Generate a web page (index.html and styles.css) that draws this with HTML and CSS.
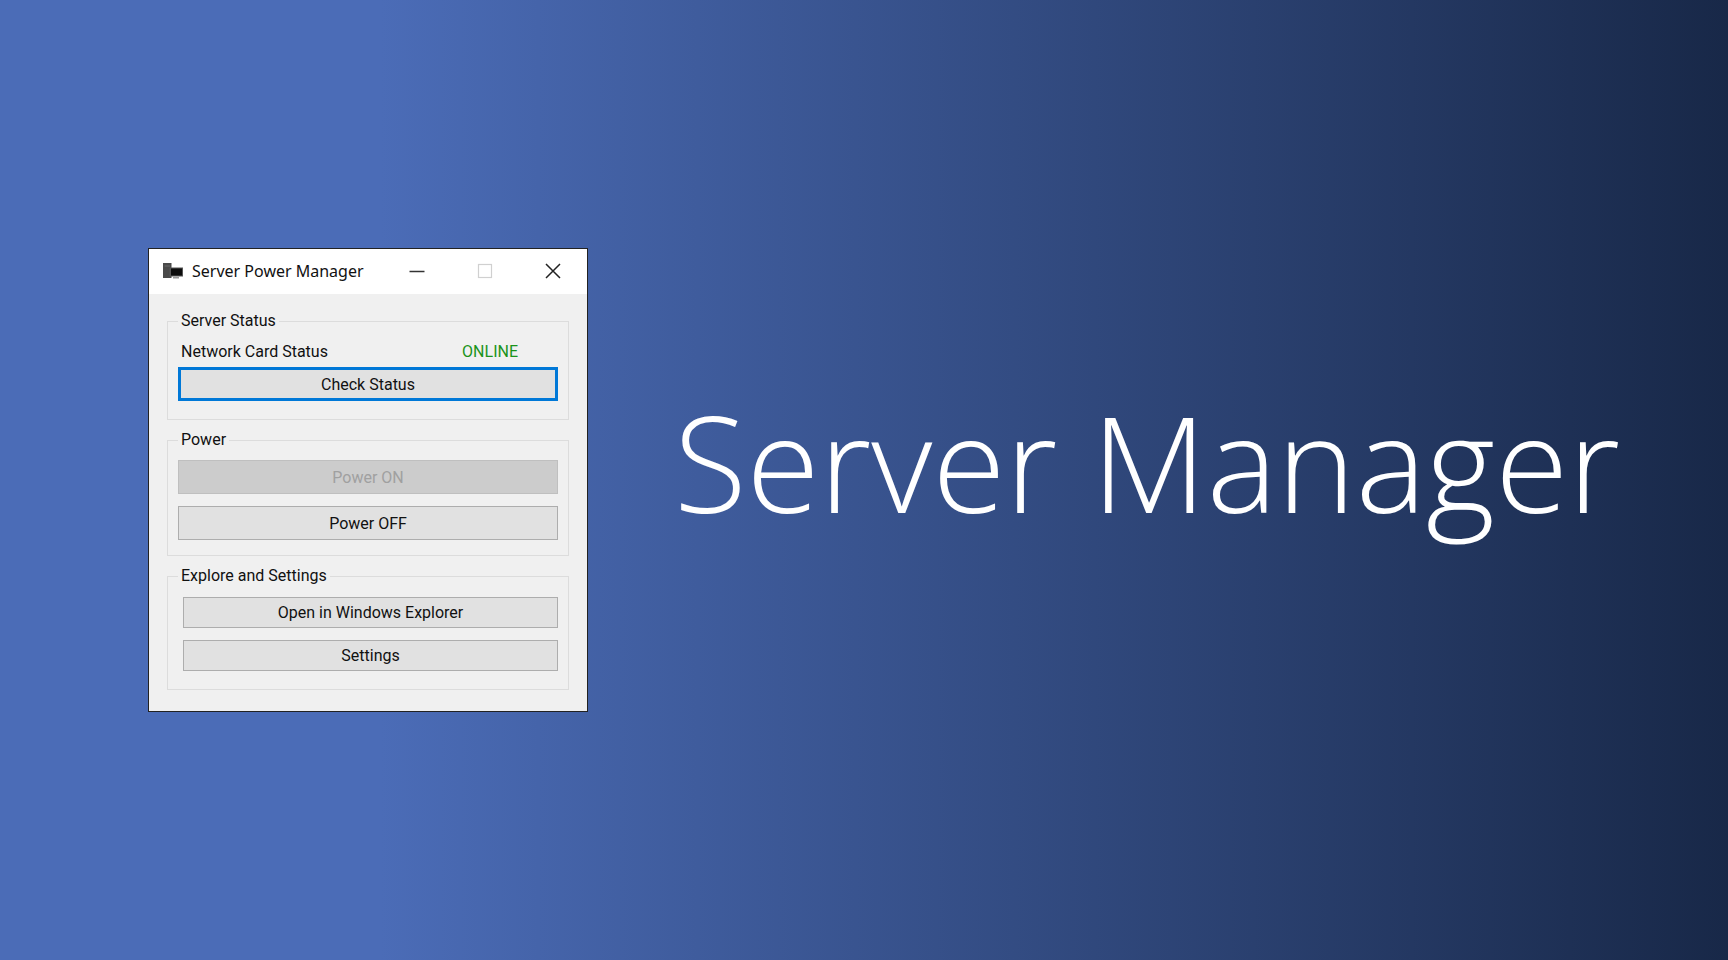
FILE: index.html
```html
<!DOCTYPE html>
<html lang="en">
<head>
<meta charset="utf-8">
<title>Server Manager</title>
<link rel="stylesheet" href="styles.css">
</head>
<body>
<main class="hero">
  <section class="window" aria-label="Server Power Manager">
    <header class="titlebar">
      <svg class="app-icon" viewBox="0 0 20 16" aria-hidden="true">
        <rect x="0" y="0" width="8.500" height="15" fill="#4a4a4a"/>
        <path d="M1.500 3H7" stroke="#6a6a6a"/>
        <rect x="6.500" y="4.500" width="13.500" height="9" fill="#555"/>
        <rect x="8" y="5.500" width="11" height="7" fill="#0c0c0c"/>
        <rect x="10" y="14" width="6" height="1.500" fill="#999"/>
      </svg>
      <span class="window-title">Server Power Manager</span>
      <div class="window-controls">
        <button class="control" aria-label="Minimize"><svg viewBox="0 0 16 16"><path d="M.5 8.500H15.500" stroke="#333" stroke-width="1.500"/></svg></button>
        <button class="control" aria-label="Maximize" disabled><svg viewBox="0 0 16 16"><rect x="1.500" y="1.500" width="13" height="13" fill="none" stroke="#d0d0d0" stroke-width="1.200"/></svg></button>
        <button class="control" aria-label="Close"><svg viewBox="0 0 16 16"><path d="M1 1L15 15M15 1L1 15" stroke="#222" stroke-width="1.500"/></svg></button>
      </div>
    </header>
    <div class="panel">
      <fieldset class="group group-status">
        <legend>Server Status</legend>
        <div class="status-row"><span>Network Card Status</span><span class="online">ONLINE</span></div>
        <button class="action action-default">Check Status</button>
      </fieldset>
      <fieldset class="group group-power">
        <legend>Power</legend>
        <button class="action" disabled>Power ON</button>
        <button class="action">Power OFF</button>
      </fieldset>
      <fieldset class="group group-explore">
        <legend>Explore and Settings</legend>
        <button class="action">Open in Windows Explorer</button>
        <button class="action">Settings</button>
      </fieldset>
    </div>
  </section>
  <h1 class="headline">Server Manager</h1>
</main>
</body>
</html>
```
FILE: styles.css
```css
* { box-sizing: border-box; }
body { margin: 0; font-family: Roboto, sans-serif; }
.hero {
  min-height: 100vh;
  display: flex;
  align-items: center;
  gap: 86px;
  padding-left: 148px;
  background: linear-gradient(90deg, #4b6cb7 0%, #4b6cb7 22%, #182848 100%);
}
.window { width: 440px; flex: none; border: 1px solid #222; background: #f0f0f0; color: #111; font-size: 16px; }
.titlebar { display: flex; align-items: center; height: 45px; background: #fff; padding: 0 26px 2px 14px; }
.app-icon { width: 20px; height: 16px; }
.window-title { margin-left: 9px; font-family: "Noto Sans", sans-serif; }
.window-controls { display: flex; margin-left: auto; gap: 52px; }
.control { border: 0; padding: 0; background: none; width: 16px; height: 16px; }
.control svg { display: block; width: 16px; height: 16px; }
.panel { display: flex; flex-direction: column; gap: 10px; padding: 17px 18px 21px; }
.group { margin: 0; padding: 0 10px; border: 1px solid #dcdcdc; }
.group legend { padding: 0 3px; line-height: 20px; }
.action { display: block; width: 100%; height: 34px; border: 1px solid #adadad; background: #e1e1e1; font: inherit; color: #111; padding: 0; }
.action:disabled { background: #ccc; border-color: #bfbfbf; color: #a0a0a0; }
.action-default { border: 3px solid #0078d7; }
.action + .action { margin-top: 12px; }
.status-row { display: flex; justify-content: space-between; padding: 11px 40px 5px 3px; line-height: 20px; }
.online { color: #1a931a; }
.group-status { padding-bottom: 18px; }
.group-power { padding-top: 10px; padding-bottom: 15px; }
.group-explore { padding-top: 11px; padding-bottom: 18px; }
.group-explore .action { height: 31px; margin-left: 5px; width: calc(100% - 5px); }
.headline { margin: 0; padding-bottom: 38px; color: #fff; font-family: "Open Sans", sans-serif; font-weight: 300; font-size: 133px; line-height: 1; white-space: nowrap; }
```
